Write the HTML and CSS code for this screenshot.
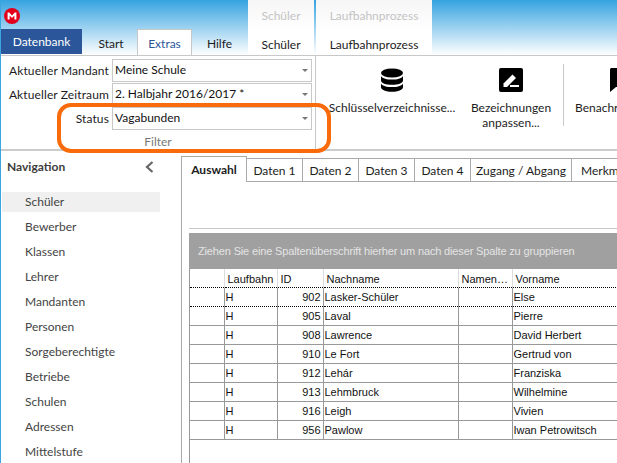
FILE: index.html
```html
<!DOCTYPE html>
<html lang="de">
<head>
  <meta charset="UTF-8" />
  <title>Extras</title>
  <link rel="stylesheet" href="styles.css">
</head>
<body>
  <div class="window">

    <header class="titlebar">
      <div class="title-left">
        <div class="logo">
          <svg width="16" height="16" viewBox="0 0 16 16">
            <circle cx="8" cy="8" r="8" fill="#e3001b"/>
            <path d="M3.6 11.5V4.6h1.6L8 7.6l2.8-3h1.6v6.9h-2V7.6L8 10 5.6 7.6v3.9z" fill="#fff"/>
          </svg>
        </div>
        <nav class="main-tabs">
          <div class="tab-file">Datenbank</div>
          <div class="tab tab-start">Start</div>
          <div class="tab tab-active">Extras</div>
          <div class="tab">Hilfe</div>
        </nav>
      </div>
      <div class="context context-schueler">
        <div class="context-title">Schüler</div>
        <div class="context-tab">Schüler</div>
      </div>
      <div class="context context-laufbahn">
        <div class="context-title">Laufbahnprozess</div>
        <div class="context-tab">Laufbahnprozess</div>
      </div>
    </header>

    <section class="ribbon">
      <div class="filter-group">
        <div class="filter-rows">
          <label class="filter-label">Aktueller Mandant</label>
          <div class="combo">Meine Schule<span class="arrow"></span></div>
          <label class="filter-label">Aktueller Zeitraum</label>
          <div class="combo">2. Halbjahr 2016/2017 *<span class="arrow"></span></div>
          <label class="filter-label">Status</label>
          <div class="combo">Vagabunden<span class="arrow"></span></div>
        </div>
        <div class="group-name">Filter</div>
      </div>
      <div class="ribbon-buttons">
        <div class="rb rb-keys">
          <svg width="24" height="24" viewBox="0 0 24 24">
            <ellipse cx="12" cy="5" rx="11" ry="4.6" fill="#000"/>
            <path d="M1 8c1.5 2.6 6 3.6 11 3.6S21.500 10.600 23 8v4.500c0 2.700-5 4.300-11 4.300S1 15.200 1 12.500z" fill="#000"/>
            <path d="M1 15.500c1.500 2.600 6 3.600 11 3.600s9.500-1 11-3.600v3.700c0 2.700-5 4.500-11 4.500S1 21.900 1 19.200z" fill="#000"/>
          </svg>
          <span>Schlüsselverzeichnisse...</span>
        </div>
        <div class="rb rb-names">
          <svg width="24" height="24" viewBox="0 0 24 24">
            <rect width="24" height="24" rx="2" fill="#000"/>
            <path d="M4.500 15.500 13.500 6.500l3.500 3.500-9 9H4.500z" fill="#fff"/>
            <rect x="11" y="17" width="9" height="2" fill="#fff"/>
          </svg>
          <span>Bezeichnungen<br>anpassen...</span>
        </div>
        <div class="rb-sep"></div>
        <div class="rb rb-notify">
          <svg width="24" height="24" viewBox="0 0 24 24">
            <path d="M2 0h22v19H7l-6 5V2a2 2 0 0 1 1-2z" fill="#000"/>
          </svg>
          <span>Benachrichtigung</span>
        </div>
      </div>
    </section>

    <main class="body">
      <aside class="nav">
        <div class="nav-head">
          <span>Navigation</span>
          <svg width="9" height="12" viewBox="0 0 9 12"><path d="M7.500 1 2 6l5.500 5" fill="none" stroke="#666" stroke-width="2.200"/></svg>
        </div>
        <ul class="nav-list">
          <li class="nav-current">Schüler</li>
          <li>Bewerber</li>
          <li>Klassen</li>
          <li>Lehrer</li>
          <li>Mandanten</li>
          <li>Personen</li>
          <li>Sorgeberechtigte</li>
          <li>Betriebe</li>
          <li>Schulen</li>
          <li>Adressen</li>
          <li>Mittelstufe</li>
        </ul>
      </aside>

      <div class="content">
        <div class="page-tabs">
          <div class="page-tab page-tab-active">Auswahl</div>
          <div class="page-tab w56">Daten 1</div>
          <div class="page-tab w56">Daten 2</div>
          <div class="page-tab w56">Daten 3</div>
          <div class="page-tab w56">Daten 4</div>
          <div class="page-tab w101">Zugang / Abgang</div>
          <div class="page-tab tab-last">Merkmale</div>
        </div>
        <div class="page">
          <div class="page-rule"></div>
          <div class="group-bar">Ziehen Sie eine Spaltenüberschrift hierher um nach dieser Spalte zu gruppieren</div>
          <div class="grid-wrap">
            <table class="grid">
              <colgroup>
                <col class="c0"><col class="c1"><col class="c2"><col class="c3"><col class="c4"><col class="c5">
              </colgroup>
              <thead>
                <tr><th></th><th>Laufbahn</th><th>ID</th><th>Nachname</th><th>Namen…</th><th>Vorname</th></tr>
              </thead>
              <tbody>
                <tr class="row-focus"><td></td><td>H</td><td class="num">902</td><td>Lasker-Schüler</td><td></td><td>Else</td></tr>
                <tr><td></td><td>H</td><td class="num">905</td><td>Laval</td><td></td><td>Pierre</td></tr>
                <tr><td></td><td>H</td><td class="num">908</td><td>Lawrence</td><td></td><td>David Herbert</td></tr>
                <tr><td></td><td>H</td><td class="num">910</td><td>Le Fort</td><td></td><td>Gertrud von</td></tr>
                <tr><td></td><td>H</td><td class="num">912</td><td>Lehár</td><td></td><td>Franziska</td></tr>
                <tr><td></td><td>H</td><td class="num">913</td><td>Lehmbruck</td><td></td><td>Wilhelmine</td></tr>
                <tr><td></td><td>H</td><td class="num">916</td><td>Leigh</td><td></td><td>Vivien</td></tr>
                <tr><td></td><td>H</td><td class="num">956</td><td>Pawlow</td><td></td><td>Iwan Petrowitsch</td></tr>
              </tbody>
            </table>
          </div>
        </div>
      </div>
    </main>

    <div class="highlight"></div>
  </div>
</body>
</html>
```

FILE: styles.css
```css
html, body {
  margin: 0;
  padding: 0;
}
body {
  width: 617px;
  height: 463px;
  overflow: hidden;
  background: #fff;
  color: #1c1c1c;
  font-family: Lato, "Noto Sans", sans-serif;
  font-size: 12px;
}
.window {
  position: relative;
  width: 617px;
  height: 463px;
  overflow: hidden;
  border-left: 1px solid #3aa5e0;
  box-sizing: border-box;
  display: flex;
  flex-direction: column;
}

/* title bar */
.titlebar {
  height: 55px;
  flex: none;
  display: flex;
  background: linear-gradient(#36a3e1, #ffffff);
}
.title-left {
  width: 247px;
  display: flex;
  flex-direction: column;
  justify-content: space-between;
}
.logo {
  padding: 8px 0 0 3px;
  height: 16px;
}
.main-tabs {
  display: flex;
  height: 26px;
}
.tab-file {
  width: 81px;
  height: 25px;
  background: #2b579a;
  color: #fff;
  text-align: center;
  line-height: 26px;
}
.tab {
  width: 55px;
  text-align: center;
  line-height: 30px;
}
.tab-start {
  padding-left: 3px;
  width: 52px;
}
.tab-active {
  height: 26px;
  box-sizing: border-box;
  background: #fff;
  border: 1px solid #c8c8c8;
  border-bottom: 0;
  color: #2b579a;
  line-height: 28px;
  position: relative;
  z-index: 1;
}
.context {
  margin-right: 2px;
  text-align: center;
  background: linear-gradient(#f6f6f6, #fff 60%);
}
.context-schueler { width: 66px; }
.context-laufbahn { width: 116px; }
.context-title {
  color: #c4c4c4;
  height: 30px;
  line-height: 32px;
}
.context-tab {
  line-height: 30px;
}

/* ribbon */
.ribbon {
  height: 96px;
  flex: none;
  box-sizing: border-box;
  display: flex;
  border-top: 1px solid #c8c8c8;
  border-bottom: 2px solid #ccc;
}
.filter-group {
  width: 315px;
  flex: none;
  box-sizing: border-box;
  border-right: 1px solid #c8c8c8;
  padding: 3px 3px 0 0;
}
.filter-rows {
  display: grid;
  grid-template-columns: 108px 200px;
  column-gap: 3px;
  row-gap: 1px;
  align-items: center;
}
.filter-label {
  text-align: right;
  white-space: nowrap;
  letter-spacing: 0.12px;
}
.combo {
  position: relative;
  height: 23px;
  box-sizing: border-box;
  border: 1px solid #c8c8c8;
  padding-left: 2px;
  line-height: 19px;
  color: #111;
}
.arrow {
  position: absolute;
  right: 3px;
  top: 9px;
  border-left: 3px solid transparent;
  border-right: 3px solid transparent;
  border-top: 3px solid #777;
}
.group-name {
  text-align: center;
  color: #777;
  padding: 4px 0 0 3px;
}
.ribbon-buttons {
  position: relative;
  flex: 1;
  display: flex;
  align-items: flex-start;
  overflow: hidden;
}
.rb {
  display: flex;
  flex-direction: column;
  align-items: center;
  padding-top: 12px;
  text-align: center;
  line-height: 15px;
  white-space: nowrap;
}
.rb span {
  margin-top: 8px;
}
.rb-keys {
  width: 126px;
  margin-left: 13px;
}
.rb-names {
  width: 80px;
  margin-left: 16px;
}
.rb-sep {
  width: 1px;
  height: 62px;
  margin: 8px 11px 0 12px;
  background: #c8c8c8;
  flex: none;
}
.rb-notify {
  width: 92px;
  flex: none;
}

/* lower part */
.body {
  flex: 1;
  min-height: 0;
  display: flex;
}
.nav {
  width: 180px;
  flex: none;
}
.nav-head {
  width: 147px;
  display: flex;
  justify-content: space-between;
  align-items: center;
  padding: 8px 0 0 6px;
  font-weight: bold;
  color: #3c3c3c;
}
.nav-list {
  list-style: none;
  margin: 18px 0 0 1px;
  padding: 0;
  width: 158px;
}
.nav-list li {
  height: 20px;
  line-height: 20px;
  margin-bottom: 5px;
  padding-left: 23px;
  color: #444;
}
.nav-list .nav-current {
  background: #f0f0f0;
}
.content {
  flex: 1;
  min-width: 0;
  padding-top: 5px;
}
.page-tabs {
  display: flex;
  align-items: flex-end;
  height: 26px;
}
.page-tab {
  flex: none;
  box-sizing: border-box;
  height: 24px;
  border: 1px solid #aaa;
  border-left: 0;
  text-align: center;
  line-height: 23px;
}
.page-tab-active {
  width: 66px;
  height: 26px;
  border-left: 1px solid #aaa;
  border-bottom: 0;
  font-weight: bold;
  line-height: 26px;
  position: relative;
  z-index: 1;
  background: #fff;
}
.w56 { width: 56px; }
.w101 { width: 101px; }
.tab-last {
  padding-left: 9px;
  text-align: left;
  flex: 1;
  min-width: 0;
  white-space: nowrap;
  overflow: hidden;
  border-right: 0;
}
.page {
  height: 282px;
  box-sizing: border-box;
  border-left: 1px solid #aaa;
  margin-top: -1px;
  padding: 47px 0 0 7px;
  display: flex;
  flex-direction: column;
}
.page-rule {
  height: 1px;
  background: #c8c8c8;
  margin-bottom: 4px;
}
.group-bar {
  height: 36px;
  flex: none;
  line-height: 36px;
  padding-left: 9px;
  background: #a0a0a0;
  color: #e4e4e4;
  white-space: nowrap;
  font-family: "Liberation Sans", Arial, sans-serif;
  font-size: 11px;
  letter-spacing: -0.15px;
}
.grid-wrap {
  flex: 1;
  border-left: 1px solid #999;
}
.grid {
  border-collapse: collapse;
  table-layout: fixed;
  width: 428px;
  font-family: "Liberation Sans", Arial, sans-serif;
  font-size: 11px;
  color: #111;
}
.c0 { width: 34px; }
.c1 { width: 53px; }
.c2 { width: 46px; }
.c3 { width: 135px; }
.c4 { width: 54px; }
.c5 { width: 106px; }
.grid th {
  height: 18px;
  padding: 2px 0 0 3px;
  font-weight: normal;
  text-align: left;
  border-left: 1px solid #ddd;
  white-space: nowrap;
  overflow: hidden;
  box-sizing: border-box;
}
.grid th:first-child {
  border-left: 0;
}
.grid td {
  height: 19px;
  padding: 0 0 0 1px;
  border: 1px solid #999;
  border-top: 0;
  white-space: nowrap;
  overflow: hidden;
  box-sizing: border-box;
}
.grid td:first-child {
  border-left: 0;
}
.grid td.num {
  text-align: right;
  padding: 0 2px 0 0;
}
.grid .row-focus td {
  border-top: 1px dotted #000;
  border-bottom: 1px dotted #000;
}

/* callout drawn over the ribbon */
.highlight {
  position: absolute;
  left: 56px;
  top: 103px;
  width: 274px;
  height: 50px;
  box-sizing: border-box;
  border: 4px solid #f96b0a;
  border-radius: 14px;
}
```
